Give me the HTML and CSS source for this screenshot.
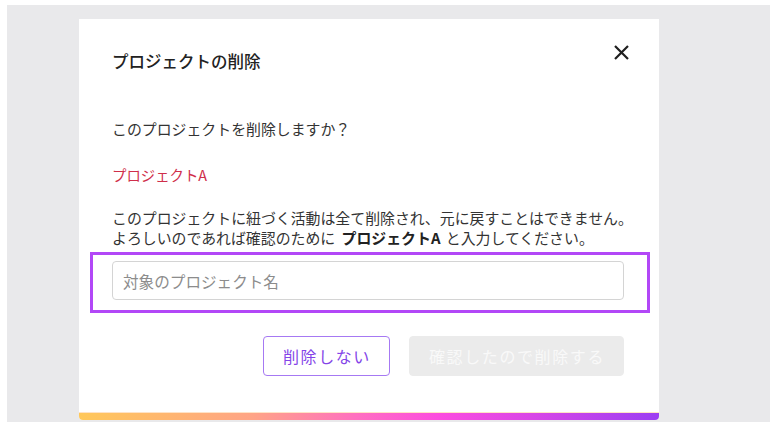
FILE: index.html
```html
<!DOCTYPE html>
<html lang="ja">
<head>
<meta charset="utf-8">
<title>プロジェクトの削除</title>
<link rel="stylesheet" href="styles.css">
</head>
<body>
<div class="backdrop">
  <div class="modal">
    <div class="modal-body">
      <div class="header">
        <h1 class="title">プロジェクトの削除</h1>
        <button class="close" aria-label="閉じる">
          <svg width="15" height="15" viewBox="0 0 15 15"><path d="M1 1L14 14M14 1L1 14" stroke="#1f1f1f" stroke-width="2.2" stroke-linecap="butt"/></svg>
        </button>
      </div>
      <p class="question">このプロジェクトを削除しますか？</p>
      <p class="project-name">プロジェクトA</p>
      <p class="notice">このプロジェクトに紐づく活動は全て削除され、元に戻すことはできません。<br>よろしいのであれば確認のために <strong>プロジェクトA</strong> と入力してください。</p>
      <div class="field">
        <input class="input" type="text" placeholder="対象のプロジェクト名">
        <span class="highlight"></span>
      </div>
      <div class="actions">
        <button class="btn btn-outline">削除しない</button>
        <button class="btn btn-disabled" disabled>確認したので削除する</button>
      </div>
    </div>
    <div class="gradient"></div>
  </div>
</div>
</body>
</html>
```

FILE: styles.css
```css
* { box-sizing: border-box; }
html, body {
  margin: 0;
  padding: 0;
  background: #ffffff;
  font-family: "Noto Sans CJK JP", "Noto Sans", sans-serif;
  color: #333333;
}
.backdrop {
  margin: 5px 0 0 7px;
  width: 763px;
  height: 417px;
  background: #e9e9eb;
  padding: 14px 0 0 72px;
}
.modal {
  width: 580px;
  height: 401px;
  background: #ffffff;
  display: flex;
  flex-direction: column;
  border-radius: 0 0 4px 4px;
  overflow: hidden;
}
.modal-body {
  flex: 1;
  padding: 30px 35px 0 33px;
}
.header {
  display: flex;
  justify-content: space-between;
  align-items: flex-start;
}
.title {
  margin: 0;
  font-size: 16.5px;
  line-height: 24px;
  font-weight: 500;
  color: #222222;
}
.close {
  margin: -4px -5px 0 0;
  padding: 0;
  border: 0;
  background: none;
  width: 15px;
  height: 15px;
  display: block;
}
.close svg { display: block; }
.question {
  margin: 46px 0 0;
  font-size: 14.9px;
  line-height: 20px;
}
.project-name {
  margin: 26px 0 0;
  font-size: 14.4px;
  line-height: 20px;
  color: #cf2e4a;
}
.notice {
  margin: 23px 0 0;
  font-size: 14.9px;
  line-height: 20px;
  white-space: nowrap;
}
.notice strong {
  font-weight: 700;
  color: #222222;
  margin-left: 3px;
  margin-right: 2px;
}
.field {
  position: relative;
  margin-top: 13px;
}
.input {
  display: block;
  width: 100%;
  height: 39px;
  border: 1px solid #d4d4d4;
  border-radius: 4px;
  padding: 0 10px;
  font-family: inherit;
  font-size: 15.6px;
  color: #333333;
  outline: none;
}
.input::placeholder { color: #8c8c8c; }
.highlight {
  position: absolute;
  top: -9px;
  left: -22px;
  right: -26px;
  bottom: -13px;
  border: 3px solid #b247f7;
  pointer-events: none;
}
.actions {
  margin-top: 36px;
  display: flex;
  justify-content: flex-end;
  gap: 19px;
}
.btn {
  height: 40px;
  padding: 0 18px 0 19px;
  border-radius: 4px;
  font-family: inherit;
  font-size: 16px;
  letter-spacing: 1.6px;
  line-height: 1;
}
.btn-outline {
  background: #ffffff;
  border: 1px solid #a679f3;
  color: #8445e8;
}
.btn-disabled {
  background: #ebebeb;
  border: 1px solid #ebebeb;
  color: #f9f9f9;
}
.gradient {
  height: 8px;
  background: linear-gradient(90deg, #ffc85a 0%, #ffa486 30%, #ff6fc0 48%, #fc4cdf 62%, #d946e6 78%, #9c3ef2 100%);
  border-top: 1px solid #ffe3c6;
}
```
